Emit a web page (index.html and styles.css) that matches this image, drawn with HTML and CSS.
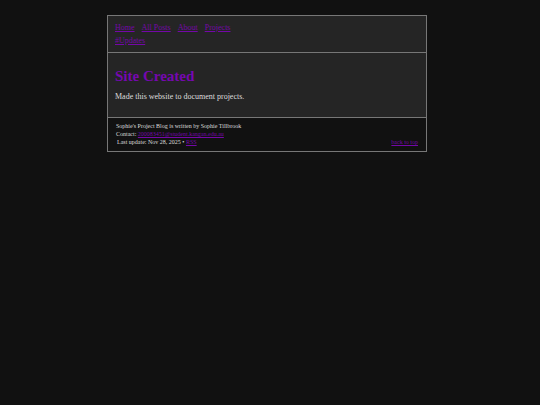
FILE: index.html
```
<!DOCTYPE html>
<html lang="en">
<head>
    <meta charset="UTF-8">
    <meta name="viewport" content="width=device-width, initial-scale=1.0">
    <title>Sophie's Project Blog</title>
    <link rel="stylesheet" href="styles.css">
</head>
<body>
    <div class="container" id="top">
        <header class="header">
            <nav class="nav">
                <a href="#">Home</a>
                <a href="#">All Posts</a>
                <a href="#">About</a>
                <a href="#">Projects</a>
            </nav>
            <nav class="nav">
                <a href="#">#Updates</a>
            </nav>
        </header>
        <main class="content">
            <h1>Site Created</h1>
            <p>Made this website to document projects.</p>
        </main>
        <footer class="footer">
            <div>Sophie's Project Blog is written by Sophie Tillbrook</div>
            <div>Contact: <a href="mailto:200083451@student.kangan.edu.au">200083451@student.kangan.edu.au</a></div>
            <div class="footer-row">
                <span>Last update: Nov 28, 2025 • <a href="#">RSS</a></span>
                <a href="#top">back to top</a>
            </div>
        </footer>
    </div>
</body>
</html>
```

FILE: styles.css
```
body {
    font-family: "Liberation Serif", "Times New Roman", serif;
    font-size: 8px;
    background: #111;
    color: #ddd;
    margin: 0;
    padding: 15px 6px 15px 0;
}
a {
    color: #7407a8;
}
.container {
    box-sizing: border-box;
    max-width: 320px;
    margin: 0 auto;
    border: 1px solid #777;
    background: #252525;
}
.header {
    padding: 5px 7px;
    border-bottom: 1px solid #777;
}
.nav {
    display: flex;
    gap: 7px;
    line-height: 13px;
}
.content {
    padding: 14px 7px 15px;
}
h1 {
    margin: 0 0 6px;
    font-size: 15px;
    line-height: 18px;
    color: #7608b0;
}
p {
    margin: 0;
    line-height: 11px;
}
.footer {
    padding: 4px 8px 5px;
    border-top: 1px solid #777;
    background: #111;
    font-size: 6px;
    line-height: 8px;
}
.footer-row {
    display: flex;
    justify-content: space-between;
    padding-left: 1px;
}
```
